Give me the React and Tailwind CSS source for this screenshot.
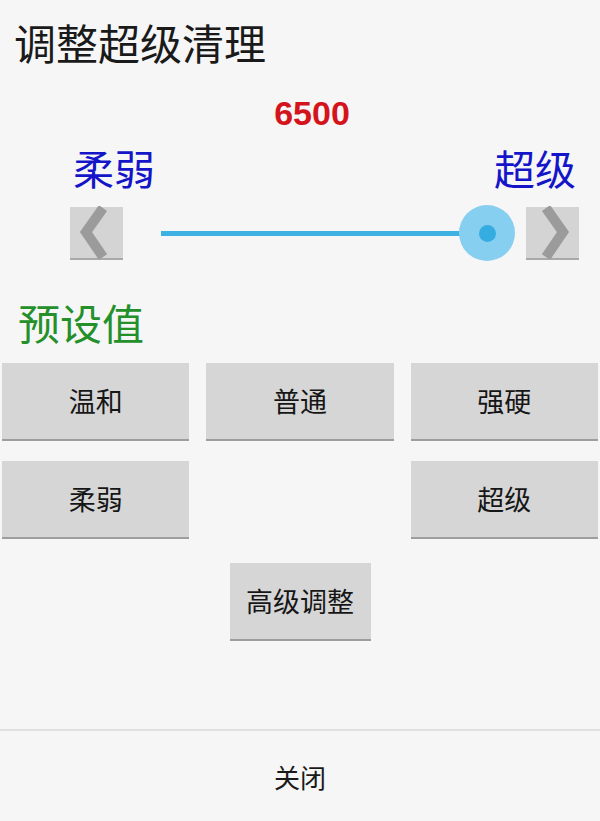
import React from 'react';

const cjk = { fontFamily: '"Noto Sans CJK SC", "Noto Sans", sans-serif' };

function ArrowBtn({ dir }) {
  return (
    <div className="w-[53px] h-[53px] bg-[#d4d4d4] border-b-2 border-[#a9a9a9] flex items-center justify-center shrink-0">
      <svg width="53" height="53" viewBox="0 0 53 53">
        {dir === 'left' ? (
          <polyline points="33,2 16,26 33,51" fill="none" stroke="#9b9b9b" strokeWidth="10" strokeLinejoin="miter" />
        ) : (
          <polyline points="20,2 37,26 20,51" fill="none" stroke="#9b9b9b" strokeWidth="10" strokeLinejoin="miter" />
        )}
      </svg>
    </div>
  );
}

function Btn({ children, className = '' }) {
  return (
    <div className={`h-[78px] bg-[#d6d6d6] border-b-2 border-[#9e9e9e] flex items-center justify-center text-[27px] text-[#161616] ${className}`}>
      {children}
    </div>
  );
}

export default function App() {
  return (
    <div className="w-[600px] h-[821px] bg-[#f6f6f6] flex flex-col" style={cjk}>
      {/* Title */}
      <div className="pl-[14px] pt-[15px] text-[42px] leading-[54px] text-[#1a1a1a]">调整超级清理</div>

      {/* Value */}
      <div
        className="mt-[24px] pl-[24px] text-center text-[34px] leading-[40px] font-bold text-[#d4141d]"
        style={{ fontFamily: '"Liberation Sans", Arial, sans-serif' }}
      >
        6500
      </div>

      {/* Labels */}
      <div className="flex justify-between pl-[73px] pr-[24px] mt-[9px] text-[41px] leading-[50px] text-[#1414c8]">
        <span>柔弱</span>
        <span>超级</span>
      </div>

      {/* Slider */}
      <div className="flex items-center pl-[70px] pr-[21px] mt-[13px] h-[56px]">
        <ArrowBtn dir="left" />
        <div className="flex-1 relative h-[56px] ml-[38px] mr-[10px] flex items-center">
          <div className="h-[5px] bg-[#3db1e2] w-[326px]" />
          <div className="absolute left-[298px] top-0 w-[56px] h-[56px] rounded-full bg-[#87cff0] flex items-center justify-center">
            <div className="w-[17px] h-[17px] rounded-full bg-[#36ade0]" />
          </div>
        </div>
        <ArrowBtn dir="right" />
      </div>

      {/* Presets */}
      <div className="pl-[18px] mt-[36px] text-[42px] leading-[50px] text-[#23902a]">预设值</div>

      <div className="grid grid-cols-3 gap-x-[17px] gap-y-[20px] px-[2px] mt-[16px]">
        <Btn>温和</Btn>
        <Btn>普通</Btn>
        <Btn>强硬</Btn>
        <Btn>柔弱</Btn>
        <div />
        <Btn>超级</Btn>
      </div>

      <div className="flex justify-center mt-[24px]">
        <Btn className="w-[141px]">高级调整</Btn>
      </div>

      <div className="flex-1" />

      {/* Footer */}
      <div className="border-t-2 border-[#e0e0e0] h-[92px] flex items-center justify-center text-[26px] text-[#1a1a1a]">
        关闭
      </div>
    </div>
  );
}
